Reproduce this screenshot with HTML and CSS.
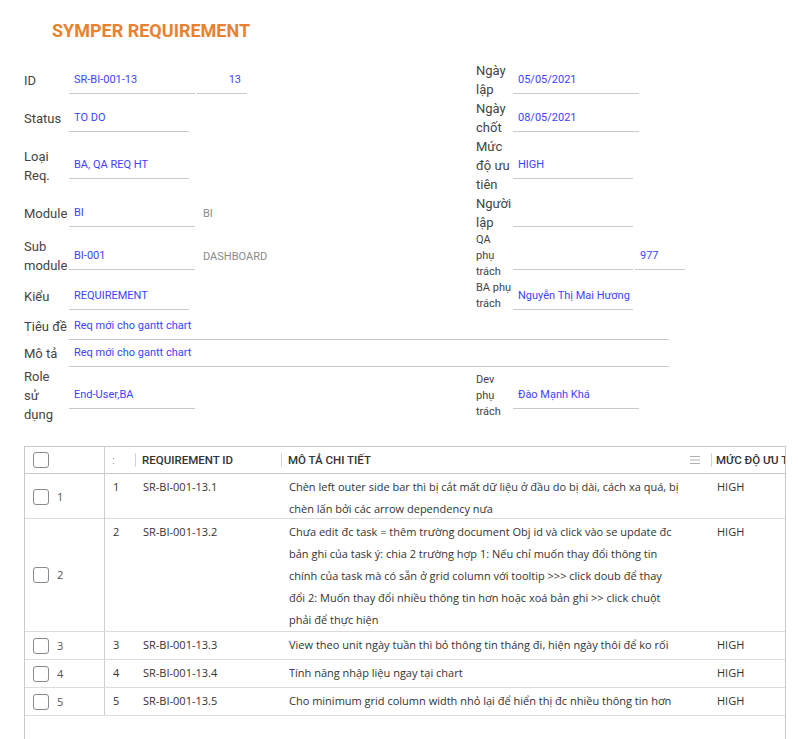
FILE: index.html
```html
<!DOCTYPE html>
<html lang="vi">
<head>
<meta charset="utf-8">
<title>Symper Requirement</title>
<link rel="stylesheet" href="styles.css">
</head>
<body>
<div class="page">
  <h1 class="title">SYMPER REQUIREMENT</h1>

  <div class="form">
    <div class="field">
      <span class="lbl">ID</span>
      <div class="inp w126">SR-BI-001-13</div>
      <div class="inp w50 num">13</div>
    </div>
    <div class="field right">
      <span class="lbl">Ngày<br>lập</span>
      <div class="inp w126">05/05/2021</div>
    </div>

    <div class="field">
      <span class="lbl">Status</span>
      <div class="inp w120">TO DO</div>
    </div>
    <div class="field right">
      <span class="lbl">Ngày<br>chốt</span>
      <div class="inp w126">08/05/2021</div>
    </div>

    <div class="field">
      <span class="lbl">Loại<br>Req.</span>
      <div class="inp w120">BA, QA REQ HT</div>
    </div>
    <div class="field right">
      <span class="lbl">Mức<br>độ ưu<br>tiên</span>
      <div class="inp w120">HIGH</div>
    </div>

    <div class="field">
      <span class="lbl">Module</span>
      <div class="inp w126">BI</div>
      <span class="note">BI</span>
    </div>
    <div class="field right">
      <span class="lbl">Người<br>lập</span>
      <div class="inp w120"></div>
    </div>

    <div class="field">
      <span class="lbl">Sub<br>module</span>
      <div class="inp w126">BI-001</div>
      <span class="note">DASHBOARD</span>
    </div>
    <div class="field right">
      <span class="lbl sm">QA<br>phụ<br>trách</span>
      <div class="inp w120"></div>
      <div class="inp w50">977</div>
    </div>

    <div class="field">
      <span class="lbl">Kiểu</span>
      <div class="inp w120">REQUIREMENT</div>
    </div>
    <div class="field right">
      <span class="lbl sm padb">BA phụ<br>trách</span>
      <div class="inp w120 clip">Nguyễn Thị Mai Hương</div>
    </div>

    <div class="field wide">
      <span class="lbl">Tiêu đề</span>
      <div class="inp w600">Req mới cho gantt chart</div>
    </div>

    <div class="field wide">
      <span class="lbl">Mô tả</span>
      <div class="inp w600">Req mới cho gantt chart</div>
    </div>

    <div class="field">
      <span class="lbl">Role<br>sử<br>dụng</span>
      <div class="inp w126">End-User,BA</div>
    </div>
    <div class="field right">
      <span class="lbl sm">Dev<br>phụ<br>trách</span>
      <div class="inp w126">Đào Mạnh Khá</div>
    </div>
  </div>

  <div class="grid">
    <div class="thead">
      <div class="th c0"><span class="cb"></span></div>
      <div class="th"><span class="dots">:</span></div>
      <div class="th sep">REQUIREMENT ID</div>
      <div class="th sep between">MÔ TẢ CHI TIẾT
        <svg class="menu" width="10" height="8" viewBox="0 0 10 8"><path d="M0 .5h10M0 4h10M0 7.5h10" stroke="#b0b0b0" stroke-width="1"/></svg>
      </div>
      <div class="th sep pri">MỨC ĐỘ ƯU TIÊN</div>
    </div>

    <div class="tr two">
      <div class="td c0"><span class="cb"></span><span class="rn">1</span></div>
      <div class="td">1</div>
      <div class="td">SR-BI-001-13.1</div>
      <div class="td">Chèn left outer side bar thì bị cắt mất dữ liệu ở đầu do bị dài, cách xa quá, bị<br>chèn lấn bởi các arrow dependency nưa</div>
      <div class="td pri">HIGH</div>
    </div>

    <div class="tr">
      <div class="td c0"><span class="cb"></span><span class="rn">2</span></div>
      <div class="td">2</div>
      <div class="td">SR-BI-001-13.2</div>
      <div class="td">Chưa edit đc task = thêm trường document Obj id và click vào se update đc<br>bản ghi của task ý: chia 2 trường hợp 1: Nếu chỉ muốn thay đổi thông tin<br>chính của task mà có sẵn ở grid column với tooltip &gt;&gt;&gt; click doub để thay<br>đổi 2: Muốn thay đổi nhiều thông tin hơn hoặc xoá bản ghi &gt;&gt; click chuột<br>phải để thực hiện</div>
      <div class="td pri">HIGH</div>
    </div>

    <div class="tr">
      <div class="td c0"><span class="cb"></span><span class="rn">3</span></div>
      <div class="td">3</div>
      <div class="td">SR-BI-001-13.3</div>
      <div class="td">View theo unit ngày tuần thì bỏ thông tin tháng đi, hiện ngày thôi để ko rối</div>
      <div class="td pri">HIGH</div>
    </div>

    <div class="tr">
      <div class="td c0"><span class="cb"></span><span class="rn">4</span></div>
      <div class="td">4</div>
      <div class="td">SR-BI-001-13.4</div>
      <div class="td">Tính năng nhập liệu ngay tại chart</div>
      <div class="td pri">HIGH</div>
    </div>

    <div class="tr">
      <div class="td c0"><span class="cb"></span><span class="rn">5</span></div>
      <div class="td">5</div>
      <div class="td">SR-BI-001-13.5</div>
      <div class="td">Cho minimum grid column width nhỏ lại để hiển thị đc nhiều thông tin hơn</div>
      <div class="td pri">HIGH</div>
    </div>
  </div>
</div>
</body>
</html>
```

FILE: styles.css
```css
html { overflow: hidden; }
body {
  margin: 0;
  background: #fff;
  font-family: Roboto, "Liberation Sans", sans-serif;
}
.page {
  padding: 20px 0 0 24px;
  width: 762px;
}
.title {
  margin: 0 0 20px 28px;
  font-size: 18px;
  line-height: 21px;
  font-weight: 700;
  color: #e8822e;
}

/* form */
.form {
  display: grid;
  grid-template-columns: 452px 1fr;
  align-items: center;
}
.field {
  display: flex;
  align-items: center;
}
.field.wide { grid-column: 1 / -1; }
.lbl {
  flex: none;
  width: 45px;
  font-size: 13px;
  line-height: 19px;
  color: #444;
}
.field.right .lbl { width: 37px; }
.lbl.sm {
  font-size: 11px;
  line-height: 16px;
}
.lbl.padb { padding-bottom: 1px; }
.inp {
  flex: none;
  box-sizing: border-box;
  height: 27px;
  padding: 0 5px;
  border-bottom: 1px solid #c9c9c9;
  font-size: 11px;
  line-height: 26px;
  color: #3f3fff;
  white-space: nowrap;
  overflow: hidden;
}
.inp + .inp { margin-left: 2px; }
.inp.num { text-align: right; padding-right: 6px; }
.w50 { width: 50px; }
.w120 { width: 120px; }
.w126 { width: 126px; }
.w600 { width: 600px; }
.note {
  margin-left: 8px;
  font-size: 11px;
  color: #8a8a8a;
}

/* grid */
.grid {
  margin-top: 22px;
  width: 762px;
  height: 320px;
  box-sizing: border-box;
  border: 1px solid #c8c8c8;
  overflow: hidden;
}
.thead, .tr {
  display: grid;
  grid-template-columns: 80px 30px 146px 430px 200px;
}
.thead {
  height: 26px;
  border-bottom: 1px solid #c8c8c8;
}
.th {
  display: flex;
  align-items: center;
  padding-left: 7px;
  font-size: 11.5px;
  font-weight: 500;
  color: #333;
  white-space: nowrap;
}
.th.sep {
  background: linear-gradient(#d4d4d4, #d4d4d4) left center / 1px 14px no-repeat;
}
.th.between {
  justify-content: space-between;
  padding-right: 11px;
}
.th.pri { padding-left: 5px; }
.dots { color: #999; font-weight: 400; }
.c0 {
  box-sizing: border-box;
  border-right: 1px solid #cfcfcf;
  padding-left: 8px;
}
.cb {
  flex: none;
  box-sizing: border-box;
  width: 16px;
  height: 16px;
  border: 1.5px solid #8a8a8a;
  border-radius: 3px;
}
.tr {
  min-height: 28px;
  box-sizing: border-box;
  border-bottom: 1px solid #dcdcdc;
  font-family: "Open Sans", "Noto Sans", sans-serif;
  font-size: 11px;
  line-height: 22px;
  color: #333;
}
.tr.two { height: 45px; }
.td {
  padding: 2px 8px 0;
  white-space: nowrap;
}
.td.c0 {
  display: flex;
  align-items: center;
  padding: 0 0 0 8px;
}
.td.pri { padding-left: 6px; }
.rn {
  margin-left: 8px;
  font-size: 11px;
  color: #555;
}
```
